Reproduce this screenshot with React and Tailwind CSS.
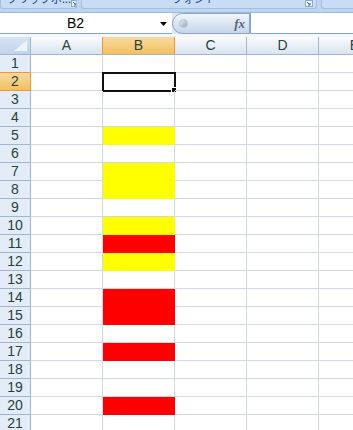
import React from 'react';

const COLS = ['A', 'B', 'C', 'D', 'E'];
const ROWS = Array.from({ length: 21 }, (_, i) => i + 1);

// fill colours for column B
const FILLS = {
  5: 'bg-[#ffff00]',
  7: 'bg-[#ffff00]',
  8: 'bg-[#ffff00]',
  10: 'bg-[#ffff00]',
  11: 'bg-[#ff0000]',
  12: 'bg-[#ffff00]',
  14: 'bg-[#ff0000]',
  15: 'bg-[#ff0000]',
  17: 'bg-[#ff0000]',
  20: 'bg-[#ff0000]',
};

const LaunchIcon = () => (
  <svg width="8" height="7" viewBox="0 0 8 7" className="shrink-0">
    <rect x="0.5" y="0.5" width="7" height="6" fill="#eef4fb" stroke="#8ea9cc" />
    <path d="M2 2 L5 5 M5 3 L5 5 L3 5" stroke="#4a6a96" strokeWidth="1" fill="none" />
  </svg>
);

const Ribbon = () => (
  <div className="h-[12px] bg-[#bfd4ee] flex items-start gap-[4px] overflow-hidden">
    <div className="w-[77px] h-[9px] bg-[#c8dcf3] border border-t-0 border-[#a3bfe3] rounded-b-[3px] flex items-end justify-between pl-[6px] pr-[3px] overflow-hidden">
      <span className="text-[11px] leading-[11px] text-[#15428b] whitespace-nowrap" style={{ fontFamily: '"Noto Sans CJK JP", sans-serif' }}>
        <span className="relative top-[-4px]">クリップボ...</span>
      </span>
      <span className="relative top-[-1px]"><LaunchIcon /></span>
    </div>
    <div className="w-[236px] h-[9px] bg-[#c8dcf3] border border-t-0 border-[#a3bfe3] rounded-b-[3px] flex items-end justify-between pl-[90px] pr-[3px] overflow-hidden">
      <span className="text-[11px] leading-[11px] text-[#15428b] whitespace-nowrap" style={{ fontFamily: '"Noto Sans CJK JP", sans-serif' }}>
        <span className="relative top-[-4px]">フォント</span>
      </span>
      <span className="relative top-[-1px]"><LaunchIcon /></span>
    </div>
    <div className="flex-1 h-[9px] bg-[#c8dcf3] border border-t-0 border-r-0 border-[#a3bfe3] rounded-bl-[3px]" />
  </div>
);

const FormulaBar = () => (
  <div className="h-[22px] bg-[#dfe9f5] border-t border-[#9db9dc] flex items-start">
    <div className="w-[172px] h-[21px] bg-white border-b border-[#8aa5c6] relative">
      <span className="absolute left-[67px] top-[2px] text-[14px] leading-[16px] text-black" style={{ fontFamily: '"Liberation Sans", Arial, sans-serif' }}>
        B2
      </span>
      <svg width="7" height="4" viewBox="0 0 7 4" className="absolute left-[160px] top-[9px]">
        <path d="M0 0 L7 0 L3.5 4 Z" fill="#000" />
      </svg>
    </div>
    <div className="w-[78px] h-[21px] bg-gradient-to-b from-[#f2f6fc] via-[#dbe6f4] to-[#c4d5ec] border border-[#8aa5c6] rounded-l-full flex items-center justify-between pl-[6px] pr-[4px]">
      <div className="w-[9px] h-[9px] rounded-full bg-gradient-to-br from-[#e8edf3] to-[#9aa6b4] border border-[#b8c3d0]" />
      <span className="text-[13px] leading-[14px] italic font-bold text-[#5b6470]" style={{ fontFamily: '"Liberation Serif", "Times New Roman", serif' }}>
        fx
      </span>
    </div>
    <div className="flex-1 h-[21px] bg-white border border-t-0 border-r-0 border-[#8aa5c6]" />
  </div>
);

const HeaderRow = () => (
  <div className="flex h-[18px] border-b border-[#9eb6ce]">
    <div className="w-[31px] shrink-0 bg-gradient-to-b from-[#d6e3f4] to-[#c1d3ec] border-r border-[#9eb6ce] relative">
      <svg width="13" height="11" viewBox="0 0 13 11" className="absolute right-[3px] bottom-[3px]">
        <path d="M13 0 L13 11 L0 11 Z" fill="#eef3fa" />
      </svg>
    </div>
    {COLS.map((c) => (
      <div
        key={c}
        className={`shrink-0 flex items-center justify-center text-[14px] text-[#27413e] ${
          c === 'B'
            ? 'bg-gradient-to-b from-[#f9d99f] to-[#f1c15f] border-x border-[#f29536] -ml-[1px] w-[73px]'
            : 'w-[72px] bg-gradient-to-b from-[#f9fbfd] to-[#dae3ef] border-r border-[#9eb6ce]'
        }`}
        style={{ fontFamily: '"Liberation Sans", Arial, sans-serif' }}
      >
        {c}
      </div>
    ))}
  </div>
);

const Row = ({ n }) => (
  <div className="flex h-[18px]">
    <div
      className={`w-[31px] shrink-0 flex items-center justify-center border-r border-b text-[14px] text-[#27413e] ${
        n === 2
          ? 'bg-gradient-to-b from-[#f9d99f] to-[#f1c15f] border-y border-[#f29536] -mt-[1px] h-[19px]'
          : 'bg-[#e4ecf7] border-[#9eb6ce]'
      }`}
      style={{ fontFamily: '"Liberation Sans", Arial, sans-serif' }}
    >
      {n}
    </div>
    {COLS.map((c) => {
      const fill = c === 'B' ? FILLS[n] : null;
      return (
        <div
          key={c}
          className={`w-[72px] shrink-0 relative ${fill ? fill : 'border-r border-b border-[#d0d7e5]'}`}
        >
          {c === 'B' && n === 2 && (
            <div className="absolute -left-[1px] -top-[1px] w-[74px] h-[20px] border-[2px] border-[#111]">
              <div className="absolute -right-[3px] -bottom-[3px] w-[4px] h-[4px] bg-black border border-white box-content" />
            </div>
          )}
        </div>
      );
    })}
  </div>
);

export default function App() {
  return (
    <div className="w-[353px] h-[430px] overflow-hidden bg-white select-none">
      <Ribbon />
      <FormulaBar />
      <div className="h-[3px] bg-[#f4f7fb]" />
      <HeaderRow />
      {ROWS.map((n) => (
        <Row key={n} n={n} />
      ))}
    </div>
  );
}
